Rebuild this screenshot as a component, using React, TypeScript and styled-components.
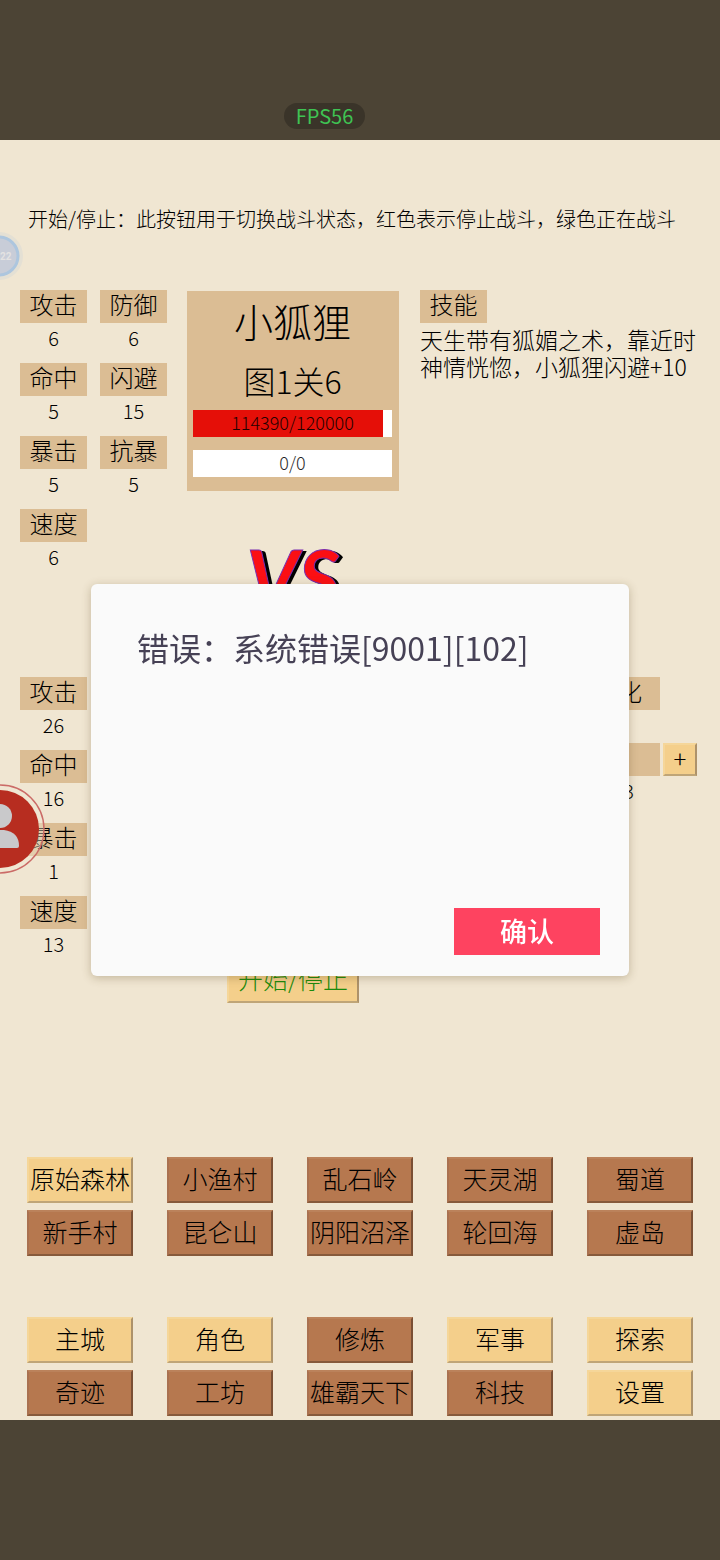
import React from "react";
import styled, { createGlobalStyle } from "styled-components";

const GlobalStyle = createGlobalStyle`
  *, *::before, *::after { box-sizing: border-box; }
  body {
    margin: 0;
    background: #4c4435;
    color: #000;
    font-family: "Noto Sans CJK SC", "Noto Sans", sans-serif;
    font-weight: 300;
  }
  button { font: inherit; color: inherit; padding: 0; cursor: pointer; }
  h1, h2, p, dl, dt, dd { margin: 0; font-weight: inherit; }
`;

const Page = styled.div`
  position: relative;
  display: flex;
  flex-direction: column;
  min-height: 100vh;
`;

const Letterbox = styled.div`
  display: flex;
  flex: 1 0 140px;
  align-items: flex-end;
  padding: 0 284px 11px;
`;

const FpsPill = styled.output`
  width: 81px;
  border-radius: 13px;
  background: #3a3429;
  color: #3fc353;
  font-size: 20px;
  font-weight: 400;
  line-height: 26px;
  text-align: center;
`;

const Stage = styled.main`
  display: flex;
  flex-direction: column;
  padding: 64px 0 4px;
  background: #f0e6d2;
`;

const Hint = styled.p`
  padding-left: 28px;
  font-size: 20px;
  line-height: 30px;
`;

const Side = styled.section<{ $top: number; $height: number }>`
  display: grid;
  grid-template-columns: 147px 212px 1fr;
  column-gap: 20px;
  min-height: ${(p) => p.$height}px;
  margin-top: ${(p) => p.$top}px;
  padding: 0 20px;
`;

const Stats = styled.dl<{ $columns: number }>`
  display: grid;
  grid-template-columns: repeat(${(p) => p.$columns}, 67px);
  column-gap: 13px;
  row-gap: 10px;
  align-content: start;
`;

const Stat = styled.div``;

const Tag = styled.dt<{ $wide?: boolean }>`
  width: ${(p) => (p.$wide ? 84 : 67)}px;
  height: 33px;
  background: #dbbd94;
  font-size: 24px;
  line-height: 28px;
  text-align: center;
`;

const Value = styled.dd`
  font-size: 20px;
  line-height: 30px;
  text-align: center;
`;

const Center = styled.div`
  display: flex;
  flex-direction: column;
  align-items: center;
`;

const EnemyCard = styled.article`
  width: 100%;
  height: 200px;
  margin-top: 1px;
  padding: 7px 7px 0 6px;
  background: #dbbd94;
  text-align: center;
`;

const EnemyName = styled.h1`
  font-size: 39px;
  line-height: 44px;
`;

const StageName = styled.h2`
  margin-top: 16px;
  font-size: 32px;
  line-height: 44px;
`;

const Bar = styled.div`
  display: grid;
  height: 27px;
  margin: 8px 0 13px;
  background: #fff;
  font-size: 18px;
  line-height: 25px;
  > * { grid-area: 1 / 1; }
`;

const BarFill = styled.div`
  background: #e50f08;
`;

const BarText = styled.span`
  opacity: 0.85;
`;

const Versus = styled.strong`
  margin-top: 50px;
  color: #fb0f14;
  font-family: Lato, sans-serif;
  font-size: 80px;
  font-style: italic;
  font-weight: 700;
  font-kerning: none;
  line-height: 72px;
  text-shadow: 4px 1px 0 #000, 2px 1px 0 #000;
  -webkit-text-stroke: 1px #7a2fb0;
`;

const Skill = styled.section`
  margin: 0 -20px 0 1px;
`;

const SkillText = styled.p`
  max-width: 280px;
  margin-top: 3px;
  font-size: 23px;
  line-height: 27px;
`;

const Upgrades = styled.dl`
  display: grid;
  grid-template-columns: 84px 34px;
  column-gap: 3px;
  align-content: start;
  justify-content: end;
  padding-right: 3px;
`;

const UpgradeTag = styled(Tag)`
  grid-column: 1;
`;

const LevelTag = styled(UpgradeTag)`
  margin-top: 33px;
`;

const Bevel = styled.button<{ $tone: "gold" | "brown" }>`
  border: 2px solid;
  background: ${(p) => (p.$tone === "gold" ? "#f4cf8b" : "#b6784f")};
  border-color: ${(p) =>
    p.$tone === "gold" ? "#f5d699 #ad926a #bfa577 #f5d699" : "#bb825b #7a4f34 #875a3b #a97150"};
  white-space: nowrap;
`;

const PlusButton = styled(Bevel)`
  height: 33px;
  margin-top: 33px;
  padding-bottom: 3px;
  font-size: 24px;
  line-height: 24px;
`;

const ToggleButton = styled(Bevel)`
  width: 132px;
  height: 46px;
  margin-top: auto;
  padding-bottom: 5px;
  color: #1c8a0c;
  font-size: 25px;
  line-height: 36px;
`;

const Menu = styled.nav<{ $top: number }>`
  display: grid;
  grid-template-columns: repeat(5, minmax(0, 1fr));
  gap: 7px 34px;
  margin-top: ${(p) => p.$top}px;
  padding: 0 27px;
`;

const MenuButton = styled(Bevel)`
  height: 46px;
  padding-bottom: 5px;
  font-size: 25px;
  line-height: 36px;
`;

const FloatingIcon = styled.svg<{ $top: number }>`
  position: absolute;
  top: ${(p) => p.$top}px;
  left: 0;
`;

const Overlay = styled.div`
  position: fixed;
  inset: 0;
  display: grid;
  place-items: center;
`;

const Dialog = styled.div`
  display: flex;
  flex-direction: column;
  justify-content: space-between;
  width: 538px;
  max-width: 92vw;
  min-height: 392px;
  padding: 40px 29px 21px 46px;
  border-radius: 6px;
  background: #fafafa;
  box-shadow: 0 2px 10px rgba(90, 70, 30, 0.3);
`;

const DialogText = styled.p`
  color: #464155;
  font-size: 32px;
  font-weight: 400;
  line-height: 46px;
`;

const ConfirmButton = styled.button`
  align-self: flex-end;
  width: 146px;
  height: 47px;
  border: 0;
  background: #fe4360;
  && { padding-bottom: 2px; color: #fff; font-size: 27px; font-weight: 500; }
`;

const enemyStats = [
  ["攻击", 6], ["防御", 6], ["命中", 5], ["闪避", 15], ["暴击", 5], ["抗暴", 5], ["速度", 6],
] as const;

const playerStats = [["攻击", 26], ["命中", 16], ["暴击", 1], ["速度", 13]] as const;

type MenuEntry = [label: string, gold: boolean];

const maps: MenuEntry[] = [
  ["原始森林", true], ["小渔村", false], ["乱石岭", false], ["天灵湖", false], ["蜀道", false],
  ["新手村", false], ["昆仑山", false], ["阴阳沼泽", false], ["轮回海", false], ["虚岛", false],
];

const features: MenuEntry[] = [
  ["主城", true], ["角色", true], ["修炼", false], ["军事", true], ["探索", true],
  ["奇迹", false], ["工坊", false], ["雄霸天下", false], ["科技", false], ["设置", true],
];

function Gauge({ value, max }: { value: number; max: number }) {
  const percent = max ? (value / max) * 100 : 0;
  return (
    <Bar role="progressbar" aria-valuenow={value} aria-valuemax={max}>
      <BarFill style={{ width: `${percent}%` }} />
      <BarText>{value}/{max}</BarText>
    </Bar>
  );
}

function StatList({ stats, columns }: { stats: readonly (readonly [string, number])[]; columns: number }) {
  return (
    <Stats $columns={columns}>
      {stats.map(([name, value]) => (
        <Stat key={name}><Tag>{name}</Tag><Value>{value}</Value></Stat>
      ))}
    </Stats>
  );
}

function MenuGrid({ items, top, label }: { items: MenuEntry[]; top: number; label: string }) {
  return (
    <Menu $top={top} aria-label={label}>
      {items.map(([name, gold]) => (
        <MenuButton key={name} type="button" $tone={gold ? "gold" : "brown"}>{name}</MenuButton>
      ))}
    </Menu>
  );
}

export default function App() {
  return (
    <Page>
      <GlobalStyle />
      <Letterbox><FpsPill>FPS56</FpsPill></Letterbox>
      <Stage>
        <Hint>开始/停止：此按钮用于切换战斗状态，红色表示停止战斗，绿色正在战斗</Hint>

        <Side $top={56} $height={282}>
          <StatList stats={enemyStats} columns={2} />
          <Center>
            <EnemyCard>
              <EnemyName>小狐狸</EnemyName>
              <StageName>图1关6</StageName>
              <Gauge value={114390} max={120000} />
              <Gauge value={0} max={0} />
            </EnemyCard>
            <Versus>VS</Versus>
          </Center>
          <Skill>
            <Tag as="h2">技能</Tag>
            <SkillText>天生带有狐媚之术，靠近时神情恍惚，小狐狸闪避+10</SkillText>
          </Skill>
        </Side>

        <Side $top={64} $height={326}>
          <StatList stats={playerStats} columns={1} />
          <Center>
            <ToggleButton type="button" $tone="gold">开始/停止</ToggleButton>
          </Center>
          <Upgrades>
            <UpgradeTag $wide>进化</UpgradeTag>
            <LevelTag $wide />
            <PlusButton type="button" $tone="gold">+</PlusButton>
            <Value>103</Value>
          </Upgrades>
        </Side>

        <MenuGrid items={maps} top={154} label="地图" />
        <MenuGrid items={features} top={61} label="功能" />
      </Stage>
      <Letterbox />

      <FloatingIcon $top={230} width="26" height="54" viewBox="0 0 26 54">
        <circle cx="-1" cy="26" r="24" fill="#e4e0d4" />
        <circle cx="-1" cy="26" r="19" fill="#c8cdd8" stroke="#adc6de" strokeWidth="3" />
        <text x="0" y="30" fontSize="10" fontWeight="700" fontFamily="Roboto, sans-serif" fill="#e3e2e2">22</text>
      </FloatingIcon>
      <FloatingIcon $top={782} width="48" height="94" viewBox="0 0 48 94">
        <circle cx="0" cy="47" r="44" fill="#efe6d2" fillOpacity="0.4" stroke="#cb6b67" strokeWidth="1.4" />
        <circle cx="0" cy="47" r="39" fill="#b72d20" />
        <circle cx="0" cy="34" r="12" fill="#c9c9cb" />
        <path d="M-20 66V64Q-20 48 -4 48H4Q19 50 19 64Q19 66 17 66Z" fill="#c9c9cb" />
      </FloatingIcon>

      <Overlay>
        <Dialog role="alertdialog" aria-modal="true" aria-labelledby="dialog-text">
          <DialogText id="dialog-text">错误：系统错误[9001][102]</DialogText>
          <ConfirmButton type="button">确认</ConfirmButton>
        </Dialog>
      </Overlay>
    </Page>
  );
}
